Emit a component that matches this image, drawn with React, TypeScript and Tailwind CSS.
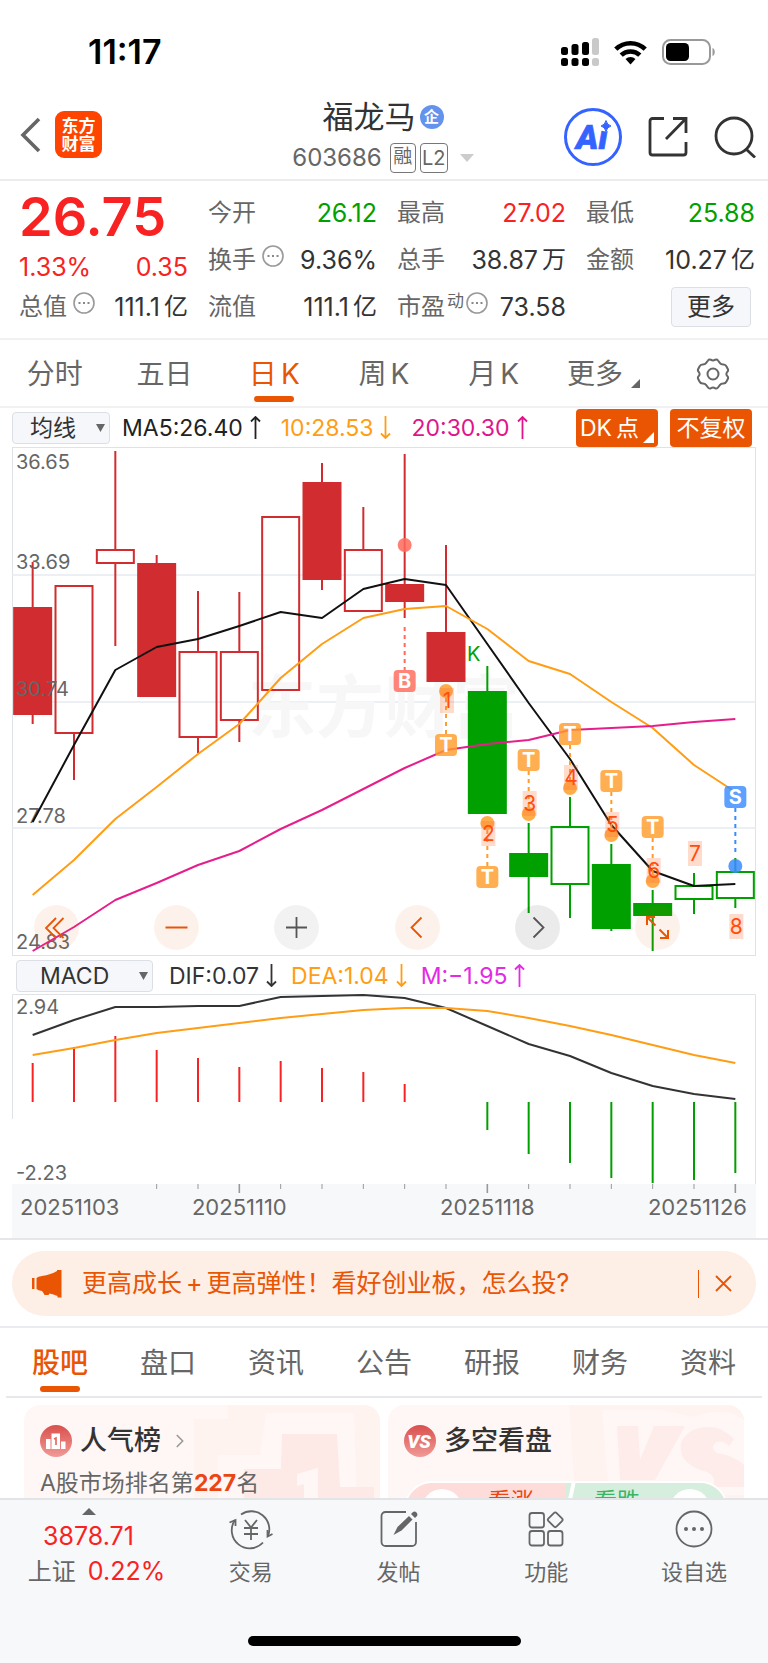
import { ChevronRight } from 'lucide-react';

type Candle = { high: number; top: number; bottom: number; low: number; color: string; hollow?: boolean };

const RED = '#d12c2f';
const GREEN = '#00a000';
const WIDTH = 744;
const STEP = WIDTH / 18;
const cx = (index: number) => STEP * (index + 0.5);
const toPoints = (values: number[]) => values.map((y, i) => `${cx(i)},${y}`).join(' ');

const candles: Candle[] = [
  { high: 115, top: 161, bottom: 267, low: 277, color: RED },
  { high: 139, top: 139, bottom: 286, low: 333, color: RED, hollow: true },
  { high: 4, top: 103, bottom: 116, low: 199, color: RED, hollow: true },
  { high: 108, top: 117, bottom: 249, low: 249, color: RED },
  { high: 144, top: 205, bottom: 290, low: 306, color: RED, hollow: true },
  { high: 145, top: 205, bottom: 273, low: 295, color: RED, hollow: true },
  { high: 70, top: 70, bottom: 243, low: 243, color: RED, hollow: true },
  { high: 16, top: 36, bottom: 132, low: 143, color: RED },
  { high: 60, top: 103, bottom: 164, low: 164, color: RED, hollow: true },
  { high: 7, top: 138, bottom: 154, low: 171, color: RED },
  { high: 98, top: 186, bottom: 234, low: 234, color: RED },
  { high: 219, top: 245, bottom: 366, low: 366, color: GREEN },
  { high: 376, top: 407, bottom: 429, low: 466, color: GREEN },
  { high: 350, top: 380, bottom: 437, low: 471, color: GREEN, hollow: true },
  { high: 397, top: 418, bottom: 481, low: 484, color: GREEN },
  { high: 443, top: 457, bottom: 468, low: 504, color: GREEN },
  { high: 426, top: 439, bottom: 452, low: 467, color: GREEN, hollow: true },
  { high: 411, top: 425, bottom: 451, low: 461, color: GREEN, hollow: true },
];

const ma5 = [375, 298, 223, 200, 192, 179, 165, 171, 142, 132, 138, 197, 256, 312, 378, 424, 439, 437];
const ma10 = [448, 413, 372, 340, 307, 277, 231, 197, 171, 162, 159, 182, 214, 227, 255, 281, 318, 345];
const ma20 = [504, 480, 453, 436, 418, 404, 382, 363, 342, 321, 303, 297, 293, 283, 281, 279, 275, 272];

const dif = [41, 26, 13, 13, 12, 12, 3, 2, 1, 4, 14, 32, 50, 62, 79, 92, 100, 105];
const dea = [61, 54, 46, 39, 34, 29, 24, 20, 16, 14, 14, 17, 24, 32, 41, 51, 61, 69];
const macdBars = [69, 53, 42, 56, 64, 73, 67, 74, 78, 90, 108, 136, 160, 169, 184, 189, 186, 179];

const axisLabels = [
  { y: 22, text: '36.65' },
  { y: 122, text: '33.69' },
  { y: 249, text: '30.74' },
  { y: 376, text: '27.78' },
  { y: 502, text: '24.83' },
];

// letter badge, its dashed leader and the dot on the candle
const signals = [
  { index: 9, letter: 'B', color: '#ff6a5a', badge: 234, dot: 98, from: 180, to: 223 },
  { index: 10, letter: 'T', color: '#ff9d2b', badge: 298, dot: 244, from: 251, to: 287 },
  { index: 11, letter: 'T', color: '#ff9d2b', badge: 430, dot: 376, from: 383, to: 419 },
  { index: 12, letter: 'T', color: '#ff9d2b', badge: 313, dot: 367, from: 324, to: 360 },
  { index: 13, letter: 'T', color: '#ff9d2b', badge: 287, dot: 341, from: 298, to: 334 },
  { index: 14, letter: 'T', color: '#ff9d2b', badge: 334, dot: 388, from: 345, to: 381 },
  { index: 15, letter: 'T', color: '#ff9d2b', badge: 380, dot: 434, from: 391, to: 427 },
  { index: 17, letter: 'S', color: '#3a8bff', badge: 350, dot: 419, from: 361, to: 405 },
];

const counts = [
  { index: 10, top: 241, n: '1' },
  { index: 11, top: 374, n: '2' },
  { index: 12, top: 344, n: '3' },
  { index: 13, top: 318, n: '4' },
  { index: 14, top: 365, n: '5' },
  { index: 15, top: 411, n: '6' },
  { index: 16, top: 394, n: '7' },
  { index: 17, top: 467, n: '8' },
];

const periods = [['分时'], ['五日'], ['日', 'K'], ['周', 'K'], ['月', 'K']];
const infoTabs = ['股吧', '盘口', '资讯', '公告', '研报', '财务', '资料'];

const StatusBar = () => (
  <div className="flex h-[90px] items-center justify-between pt-[14px] pr-13 pl-22">
    <span className="text-[34px] leading-10 font-semibold text-black">11:17</span>
    <div className="flex items-center gap-[15px]">
      <svg width="38" height="28" viewBox="0 0 38 28" aria-hidden="true">
        <rect x="0" y="9" width="7" height="8" rx="2.5" />
        <rect x="10.5" y="6" width="7" height="11" rx="2.5" />
        <rect x="21" y="4" width="7" height="13" rx="2.5" />
        <rect x="31" y="0" width="7" height="17" rx="2.5" fill="#c9c9c9" />
        <rect x="0" y="20" width="7" height="8" rx="2.5" />
        <rect x="10.5" y="20" width="7" height="8" rx="2.5" />
        <rect x="21" y="20" width="7" height="8" rx="2.5" />
        <rect x="31" y="20" width="7" height="8" rx="2.5" fill="#c9c9c9" />
      </svg>
      <svg width="33" height="25" viewBox="0 0 33 25" fill="none" stroke="#000" strokeWidth="4.6" aria-hidden="true">
        <path d="M1.8 9.2a21 21 0 0 1 29.4 0" />
        <path d="M7.2 15.2a13.4 13.4 0 0 1 18.6 0" />
        <path d="M16.5 24.5l-5-5.5a7.4 7.4 0 0 1 10 0z" fill="#000" stroke="none" />
      </svg>
      <svg width="54" height="26" viewBox="0 0 54 26" aria-hidden="true">
        <rect x="1" y="1" width="47" height="24" rx="7.5" fill="none" stroke="#999" strokeWidth="2" />
        <rect x="4" y="4" width="23" height="18" rx="4.5" />
        <path d="M50.5 9c3 1 3 7 0 8z" fill="#999" />
      </svg>
    </div>
  </div>
);

const Header = () => (
  <header className="flex h-[91px] items-center justify-between border-b-2 border-[#ececee] pr-[10px] pl-5">
    <div className="flex w-[182px] items-center gap-[14px]">
      <button aria-label="返回">
        <svg width="21" height="36" viewBox="0 0 21 36" fill="none" stroke="#666" strokeWidth="3.6">
          <path d="M19 2L3 18l16 16" />
        </svg>
      </button>
      <div className="flex h-[47px] w-[47px] flex-col items-center justify-center rounded-[9px] bg-[#ff4400] text-[17px] leading-[18px] font-bold text-white">
        <span>东方</span>
        <span>财富</span>
      </div>
    </div>
    <div className="flex flex-col items-center pt-1">
      <div className="flex h-[42px] items-center gap-1">
        <h1 className="text-[31px] leading-10 text-[#333]">福龙马</h1>
        <span className="flex h-6 w-6 items-center justify-center rounded-full bg-[#6393ec] text-[15px] leading-5 font-bold text-white">企</span>
      </div>
      <div className="flex h-10 items-center gap-1 text-[#666]">
        <span className="pr-1 text-[24px] leading-8">603686</span>
        <span className="flex h-[30px] w-[26px] items-center justify-center rounded border border-[#777] text-[19px]">融</span>
        <span className="flex h-[30px] w-7 items-center justify-center rounded border border-[#777] text-[20px]">L2</span>
        <svg className="ml-2" width="14" height="8" viewBox="0 0 14 8" fill="#ccc" aria-hidden="true">
          <path d="M0 0h14L7 8z" />
        </svg>
      </div>
    </div>
    <div className="flex items-center gap-[26px] pt-1">
      <button aria-label="AI 助手">
        <svg width="58" height="58" viewBox="0 0 58 58">
          <circle cx="29" cy="29" r="27.5" fill="#fff" stroke="#3563ff" strokeWidth="3" />
          <text x="12" y="41" className="font-[Roboto]" fontSize="34" fontWeight="900" fontStyle="italic" fill="#3563ff" stroke="#3563ff" strokeWidth="0.6">Ai</text>
          <circle cx="41.5" cy="17" r="6.5" fill="#fff" />
          <path d="M42 12.500q1 4.500 5 5.500-4 1-5 5.500-1-4.500-5-5.500 4-1 5-5.500z" fill="#3563ff" stroke="#3563ff" />
        </svg>
      </button>
      <button aria-label="分享">
        <svg width="40" height="41" viewBox="0 0 40 41" fill="none" stroke="#333" strokeWidth="2.8">
          <path d="M16 2.500H4.500a2.500 2.500 0 0 0-2.500 2.500V36.500a2.500 2.500 0 0 0 2.500 2.500H35.500a2.500 2.500 0 0 0 2.500-2.500V26" />
          <path d="M25 2.500H38V17M38 2.500L18 23" />
        </svg>
      </button>
      <button aria-label="搜索">
        <svg width="44" height="42" viewBox="0 0 44 42" fill="none" stroke="#333" strokeWidth="2.8">
          <circle cx="20" cy="20" r="18" />
          <path d="M32 33l9 8.500" />
        </svg>
      </button>
    </div>
  </header>
);

const MoreInfo = () => (
  <svg className="mb-2" width="22" height="22" viewBox="0 0 22 22" aria-hidden="true">
    <circle cx="11" cy="11" r="10" fill="none" stroke="#999" strokeWidth="1.6" />
    <path d="M5.500 11h2M10 11h2M14.500 11h2" stroke="#888" strokeWidth="2" />
  </svg>
);

type QuoteProps = { label: string; value: string; unit?: string; color?: string; info?: boolean; mark?: string };

const Quote = ({ label, value, unit, color = 'text-[#333]', info, mark }: QuoteProps) => (
  <div className="flex h-[47px] items-center justify-between">
    <dt className={`flex items-center text-[#666] ${mark ? 'gap-[2px]' : 'gap-[6px]'}`}>
      <span>{label}</span>
      {mark && <span className="mb-3 text-[17px] leading-5">{mark}</span>}
      {info && <MoreInfo />}
    </dt>
    <dd className={`flex items-center gap-1 text-[25px] ${color}`}>
      {value}
      {unit && <span className="text-[24px]">{unit}</span>}
    </dd>
  </div>
);

const QuotePanel = () => (
  <section className="border-b-2 border-[#f1f1f3] pt-2 pr-[13px] pb-2 pl-[19px] text-[24px] leading-8 whitespace-nowrap">
    <dl className="grid grid-cols-4 gap-x-5">
      <div>
        <div className="flex h-[56px] items-center text-[54px] leading-[56px] font-semibold text-[#f92222]">26.75</div>
        <div className="flex h-[38px] items-center justify-between pt-[6px] text-[25px] text-[#f92222]">
          <span>1.33%</span>
          <span>0.35</span>
        </div>
        <Quote label="总值" value="111.1" unit="亿" info />
      </div>
      <div>
        <Quote label="今开" value="26.12" color="text-[#00a000]" />
        <Quote label="换手" value="9.36%" info />
        <Quote label="流值" value="111.1" unit="亿" />
      </div>
      <div>
        <Quote label="最高" value="27.02" color="text-[#f92222]" />
        <Quote label="总手" value="38.87" unit="万" />
        <Quote label="市盈" value="73.58" mark="动" info />
      </div>
      <div>
        <Quote label="最低" value="25.88" color="text-[#00a000]" />
        <Quote label="金额" value="10.27" unit="亿" />
        <div className="flex h-[47px] items-center justify-end pr-1">
          <button className="h-10 w-20 rounded border border-[#dcdfe6] bg-[#f6f7fa] text-[#333]">更多</button>
        </div>
      </div>
    </dl>
  </section>
);

const PeriodTabs = () => (
  <nav className="grid h-[68px] grid-cols-7 border-b-2 border-[#f1f1f3] pt-px text-[28px] leading-9 text-[#666]">
    {periods.map((parts, index) => (
      <button key={parts.join('')} className={`relative flex items-center justify-center gap-1 ${index === 2 ? 'text-[#ea5504]' : ''}`}>
        {parts.map((part) => (
          <span key={part}>{part}</span>
        ))}
        {index === 2 && <span className="absolute bottom-1 h-[6px] w-10 rounded-full bg-[#ea5504]" />}
      </button>
    ))}
    <button className="flex items-center justify-center gap-2">
      更多
      <svg className="mt-5" width="9" height="9" viewBox="0 0 9 9" fill="#666" aria-hidden="true">
        <path d="M9 0v9H0z" />
      </svg>
    </button>
    <button className="flex items-center justify-center" aria-label="设置">
      <svg width="34" height="32" viewBox="0 0 34 32" fill="none" stroke="#666" strokeWidth="2">
        <path d="M12 2.500Q13 1 15 1.800 17 3 19 1.800 21 1 22 2.500L24 5.200Q25 6.600 27.500 6.500 29.500 6.500 30.500 8.500L32 11.500Q32.500 13 31 14.200 29.800 16 31 17.800 32.500 19 32 20.500L30.500 23.500Q29.500 25.500 27.500 25.500 25 25.400 24 26.800L22 29.500Q21 31 19 30.200 17 29 15 30.200 13 31 12 29.500L10 26.800Q9 25.400 6.500 25.500 4.500 25.500 3.500 23.500L2 20.500Q1.500 19 3 17.800 4.200 16 3 14.200 1.500 13 2 11.500L3.500 8.500Q4.500 6.500 6.500 6.500 9 6.600 10 5.200z" />
        <circle cx="17" cy="16" r="5.5" />
      </svg>
    </button>
  </nav>
);

const Trend = ({ text, color, down }: { text: string; color: string; down?: boolean }) => (
  <span className={`flex items-center gap-[7px] ${color}`}>
    {text}
    <svg width="11" height="23" viewBox="0 0 11 23" fill="none" stroke="currentColor" strokeWidth="1.8" aria-hidden="true">
      <path d={down ? 'M5.500 0v22M1 17.500l4.500 4.500 4.500-4.500' : 'M5.500 23V1M1 5.500L5.500 1 10 5.500'} />
    </svg>
  </span>
);

const Picker = ({ label, value, wide }: { label: string; value: string; wide?: boolean }) => (
  <div className="relative">
    <select
      aria-label={label}
      className={`block h-8 appearance-none rounded border border-[#dcdfe6] bg-[#f6f7fa] leading-7 text-[#333] ${wide ? 'w-[137px] pl-[23px]' : 'w-[98px] pl-[17px]'}`}
    >
      <option>{value}</option>
    </select>
    <svg className="pointer-events-none absolute top-3 right-[5px]" width="9" height="8" viewBox="0 0 9 8" fill="#666" aria-hidden="true">
      <path d="M0 0h9L4.500 8z" />
    </svg>
  </div>
);

const CandleChart = () => (
  <div className="relative">
    <svg className="block w-full" viewBox="0 0 744 509">
      <rect x="0.5" y="0.5" width="743" height="508" fill="#fff" stroke="#dfe2e6" />
      {[128, 255, 381].map((y) => (
        <path key={y} d={`M0 ${y}H744`} stroke="#e6eaf1" strokeWidth="1.5" />
      ))}
      <text x="236" y="285" fontSize="68" fontWeight="700" fill="#f7f7f7">东方财富</text>
      {candles.map((c, i) => (
        <g key={i} stroke={c.color} strokeWidth="2">
          <path d={`M${cx(i)} ${c.high}V${c.top}M${cx(i)} ${c.bottom}V${c.low}`} />
          <rect x={cx(i) - 18.5} y={c.top} width="37" height={c.bottom - c.top} fill={c.hollow ? 'none' : c.color} />
        </g>
      ))}
      {axisLabels.map((label) => (
        <text key={label.text} x="4" y={label.y} fontSize="20" fill="#666">{label.text}</text>
      ))}
      <g fill="none" strokeWidth="2" strokeLinejoin="round">
        <polyline points={toPoints(ma5)} stroke="#111" />
        <polyline points={toPoints(ma10)} stroke="#ff9d14" />
        <polyline points={toPoints(ma20)} stroke="#e61e8c" />
      </g>
      <text x="455" y="214" fontSize="20" fill={GREEN}>K</text>
      {signals.map((s) => (
        <g key={s.index}>
          <path d={`M${cx(s.index)} ${s.from}V${s.to}`} stroke={s.color} strokeWidth="2" strokeDasharray="4 4" />
          <circle cx={cx(s.index)} cy={s.dot} r="7" fill={s.color} fillOpacity="0.85" />
          <rect x={cx(s.index) - 11} y={s.badge - 11} width="22" height="22" rx="4" fill={s.color} fillOpacity="0.82" />
          <text x={cx(s.index)} y={s.badge + 7} fontSize="20" fontWeight="700" fill="#fff" textAnchor="middle">{s.letter}</text>
        </g>
      ))}
      {counts.map((c) => (
        <g key={c.n}>
          <rect x={cx(c.index) - 6} y={c.top} width="14" height="25" fill="#ff6a2b" fillOpacity="0.24" />
          <text x={cx(c.index) + 1} y={c.top + 20} fontSize="21" fill="#ff4d0f" textAnchor="middle">{c.n}</text>
        </g>
      ))}
    </svg>
    <div className="absolute inset-x-[22px] bottom-[6px] flex justify-between pr-[54px]">
      <button aria-label="最早" className="h-[45px] w-[45px] rounded-full bg-[#ea5504]/8">
        <svg viewBox="0 0 45 45" fill="none" stroke="#ea5504" strokeWidth="1.8">
          <path d="M22 13L12 23l10 10M29.500 13l-10 10 10 10" />
        </svg>
      </button>
      <button aria-label="缩小" className="h-[45px] w-[45px] rounded-full bg-[#ea5504]/8">
        <svg viewBox="0 0 45 45" stroke="#ea5504" strokeWidth="2">
          <path d="M11.500 22.500h22" />
        </svg>
      </button>
      <button aria-label="放大" className="h-[45px] w-[45px] rounded-full bg-black/5">
        <svg viewBox="0 0 45 45" stroke="#555" strokeWidth="1.8">
          <path d="M12 22.500h21M22.500 12v21" />
        </svg>
      </button>
      <button aria-label="向左" className="h-[45px] w-[45px] rounded-full bg-[#ea5504]/8">
        <svg viewBox="0 0 45 45" fill="none" stroke="#ea5504" strokeWidth="1.8">
          <path d="M26.500 12.500l-10 10 10 10" />
        </svg>
      </button>
      <button aria-label="向右" className="h-[45px] w-[45px] rounded-full bg-black/8">
        <svg viewBox="0 0 45 45" fill="none" stroke="#555" strokeWidth="1.8">
          <path d="M18.500 12.500l10 10-10 10" />
        </svg>
      </button>
      <button aria-label="全屏" className="h-[45px] w-[45px] rounded-full bg-[#ea5504]/8">
        <svg viewBox="0 0 45 45" fill="none" stroke="#ea5504" strokeWidth="2">
          <path d="M12 20v-8h8M12 12l8.500 8.500M33 25v8h-8M33 33l-8.500-8.500" />
        </svg>
      </button>
    </div>
  </div>
);

const MacdChart = () => (
  <svg className="block w-full" viewBox="0 0 744 244">
    <path d="M0.500 125V0.500H743.500V190" fill="none" stroke="#dfe2e6" />
    <rect x="0" y="190" width="744" height="54" fill="#f7f8fa" />
    {macdBars.map((y, i) => (
      <path key={i} d={`M${cx(i)} 108V${y}`} stroke={y < 108 ? '#f92222' : GREEN} strokeWidth="2" />
    ))}
    {macdBars.map((_, i) =>
      i > 2 ? <path key={i} d={`M${cx(i)} 190v${i % 6 === 5 ? 9 : 5}`} stroke="#999" strokeWidth={i % 6 === 5 ? 1.6 : 1} /> : null
    )}
    <g fill="none" strokeWidth="2" strokeLinejoin="round">
      <polyline points={toPoints(dif)} stroke="#333" />
      <polyline points={toPoints(dea)} stroke="#ff9d14" />
    </g>
    <g fill="#666" fontSize="20">
      <text x="4" y="20">2.94</text>
      <text x="4" y="186">-2.23</text>
    </g>
    <g fill="#666" fontSize="22">
      <text x="8" y="221">20251103</text>
      <text x={cx(5)} y="221" textAnchor="middle">20251110</text>
      <text x={cx(11)} y="221" textAnchor="middle">20251118</text>
      <text x="735" y="221" textAnchor="end">20251126</text>
    </g>
  </svg>
);

const ChartPanel = () => (
  <section className="border-b-2 border-[#e4e6ea] px-3 text-[23px] leading-8 whitespace-nowrap">
    <div className="flex h-[39px] items-center">
      <Picker label="主图指标" value="均线" />
      <div className="flex flex-1 gap-5 pl-3">
        <Trend text="MA5:26.40" color="text-[#222]" />
        <Trend text="10:28.53" color="text-[#ff9d14]" down />
        <Trend text="20:30.30" color="text-[#e0148c]" />
      </div>
      <div className="flex gap-3 pr-1">
        <button className="relative flex h-[38px] w-[82px] items-center gap-1 rounded bg-[#ea5504] pl-1 text-white">
          <span>DK</span>
          <span>点</span>
          <svg className="absolute right-1 bottom-1" width="11" height="11" viewBox="0 0 11 11" fill="#fff" aria-hidden="true">
            <path d="M11 0v11H0z" />
          </svg>
        </button>
        <button className="h-[38px] w-[82px] rounded bg-[#ea5504] text-white">不复权</button>
      </div>
    </div>
    <CandleChart />
    <div className="flex h-[38px] items-center pt-px pl-1">
      <Picker label="副图指标" value="MACD" wide />
      <div className="flex gap-[14px] pl-4">
        <Trend text="DIF:0.07" color="text-[#333]" down />
        <Trend text="DEA:1.04" color="text-[#ff9d14]" down />
        <Trend text="M:−1.95" color="text-[#e32be3]" />
      </div>
    </div>
    <MacdChart />
  </section>
);

const Notice = () => (
  <div className="border-b-2 border-[#ebecef] px-3 pt-[11px] pb-[10px]">
    <div className="flex h-[65px] items-center rounded-full bg-[#fdeee6] pr-6 pl-5 text-[25px] text-[#ea5504]">
      <svg width="30" height="28" viewBox="0 0 30 28" fill="#ea5504" aria-hidden="true">
        <path d="M0 8h2.500v11H0zM4.500 8Q6 6.500 10 6 19 4.500 25 1V0h4.500v27.500H25.500V26q-4-2-8-2.500l-1 1.500h-4l-1-2-1.500-2Q6 20.500 4.500 19z" />
      </svg>
      <a href="#notice" className="flex-1 pl-5 whitespace-nowrap">
        更高成长<span className="mx-1">+</span>更高弹性！看好创业板，怎么投?
      </a>
      <span className="h-7 w-px bg-[#ea5504]" />
      <button aria-label="关闭" className="ml-4">
        <svg width="17" height="17" viewBox="0 0 17 17" stroke="#ea5504" strokeWidth="1.8">
          <path d="M1 1l15 15M16 1L1 16" />
        </svg>
      </button>
    </div>
  </div>
);

const InfoTabs = () => (
  <nav className="mx-[6px] grid h-[70px] grid-cols-7 border-b-2 border-[#e6e8ec] pt-[2px] text-[28px] leading-9 text-[#666]">
    {infoTabs.map((tab, index) => (
      <button key={tab} className={`relative flex items-center justify-center ${index === 0 ? 'font-medium text-[#ea5504]' : ''}`}>
        {tab}
        {index === 0 && <span className="absolute bottom-1 h-[6px] w-10 rounded-full bg-[#ea5504]" />}
      </button>
    ))}
  </nav>
);

const Cards = () => (
  <div className="grid grid-cols-2 gap-2 px-6 pt-[7px]">
    <div className="relative h-[180px] overflow-hidden rounded-2xl bg-[#fff7f5] px-4 pt-4">
      <svg className="absolute top-0 right-0" width="190" height="180" viewBox="0 0 190 180" aria-hidden="true">
        <path d="M4 14H38V0H190V180H4z" fill="#fff3f0" />
        <path d="M28 50H70L76 8H164L169 180H28z" fill="#fff7f5" />
        <path d="M92 29H147L150 82H184V180H54V64H91z" fill="#fdeae7" />
        <path d="M107 69l21-6v40h-14V79l-7 2z" fill="#fff7f5" />
      </svg>
      <div className="relative flex h-10 items-center gap-2">
        <svg width="32" height="32" viewBox="0 0 32 32" aria-hidden="true">
          <defs>
            <linearGradient id="badge-red" x1="0" y1="0" x2="0" y2="1">
              <stop offset="0" stopColor="#d9504c" />
              <stop offset="1" stopColor="#f09a97" />
            </linearGradient>
          </defs>
          <circle cx="16" cy="16" r="16" fill="url(#badge-red)" />
          <path d="M6 14h4.500v10H6zM11.500 8.500h8.500V24h-8.500zM21 16.500h4.500V24H21z" fill="#fff" />
          <path d="M14 14l2-1v7" fill="none" stroke="#e1645f" strokeWidth="1.6" />
        </svg>
        <h2 className="text-[27px] leading-9 font-medium text-[#333]">人气榜</h2>
        <ChevronRight size={22} strokeWidth={1.8} color="#999" />
      </div>
      <p className="relative pt-[2px] text-[23px] leading-10 whitespace-nowrap text-[#666]">
        A股市场排名第<b className="font-bold text-[#ea4614]">227</b>名
      </p>
    </div>
    <div className="relative h-[180px] overflow-hidden rounded-2xl bg-[#fff7f5] px-4 pt-4">
      <svg className="absolute top-0 right-0" width="175" height="180" viewBox="0 0 175 180" aria-hidden="true">
        <path d="M0 0H175V180H12z" fill="#fff3f0" />
        <path d="M33 5H90L125 12Q155 0 175 15V90H40z" fill="#fff7f5" />
        <path d="M48 21H69L71 55 85 21H116L86 75H51z" fill="#fdecea" />
        <path d="M165 34Q148 16 124 25 105 36 115 54 124 64 138 67 148 72 144 82H175V60Q164 50 148 48 140 42 148 37 155 35 160 41z" fill="#fdecea" />
      </svg>
      <div className="relative flex h-10 items-center gap-2">
        <svg width="32" height="32" viewBox="0 0 32 32" aria-hidden="true">
          <circle cx="16" cy="16" r="16" fill="url(#badge-red)" />
          <text x="15" y="23" className="font-[Roboto]" fontSize="19" fontWeight="900" fontStyle="italic" fill="#fff" textAnchor="middle">VS</text>
        </svg>
        <h2 className="text-[27px] leading-9 font-medium text-[#333]">多空看盘</h2>
      </div>
      <div className="relative mt-5 grid h-14 grid-cols-2 overflow-hidden rounded-full border-2 border-white bg-[#fddcda] text-[23px] leading-9">
        <div className="flex items-start justify-between pr-8 pl-4 text-[#ea4614]">
          <span className="mt-[6px] h-10 w-10 rounded-full bg-white" />
          <span>看涨</span>
        </div>
        <div className="flex items-start justify-between bg-[#d6eedd] pr-4 pl-7 text-[#3ab564]">
          <span>看跌</span>
          <span className="mt-[6px] h-10 w-10 rounded-full bg-white" />
        </div>
        <span className="absolute left-1/2 h-full w-1 -skew-x-12 bg-white" />
      </div>
    </div>
  </div>
);

const BottomBar = () => (
  <footer className="border-t-2 border-[#e2e4e7] bg-[#f7f8fa] pb-[17px] text-[#666]">
    <div className="flex h-[136px] pt-2">
      <button className="flex w-[177px] flex-col items-center text-[24px] leading-[35px]">
        <svg width="14" height="7" viewBox="0 0 14 7" fill="#666" aria-hidden="true">
          <path d="M7 0l7 7H0z" />
        </svg>
        <span className="pt-1 text-[25px] text-[#f92222]">3878.71</span>
        <span className="flex gap-3 pl-4">
          上证 <span className="text-[25px] text-[#f92222]">0.22%</span>
        </span>
      </button>
      <div className="grid flex-1 grid-cols-4 text-[22px] leading-8">
        <button className="flex flex-col items-center gap-[6px]">
          <svg width="44" height="42" viewBox="0 0 44 42" fill="none" stroke="#666" strokeWidth="1.8">
            <path d="M12 6.500A18 18 0 0 1 39 28M34 34.500A18 18 0 0 1 6 12" />
            <path d="M0.500 14.500l6-2.500v6M38.500 22v6.500l5-2.500" />
            <path d="M16 12l6 7.500 6-7.500M15 20h14M15 26h14M22 20v12" />
          </svg>
          交易
        </button>
        <button className="flex flex-col items-center gap-[6px]">
          <svg width="38" height="42" viewBox="0 0 38 42" fill="none" stroke="#666" strokeWidth="1.8">
            <path d="M26 4H5.500A4 4 0 0 0 1.500 8V34a4 4 0 0 0 4 4H32a4 4 0 0 0 4-4V14" />
            <path d="M13.500 27l4-8L29 8l3.500 3.500L21.500 22.500zM31 6l2-2q2-1 3.500.500t.5 3.500l-2 2z" fill="#666" stroke="none" />
          </svg>
          发帖
        </button>
        <button className="flex flex-col items-center gap-[6px]">
          <svg width="36" height="42" viewBox="0 0 36 42" fill="none" stroke="#666" strokeWidth="1.8">
            <rect x="1.5" y="5" width="14.5" height="14.5" rx="2.5" />
            <rect x="1.5" y="23" width="14.5" height="14.5" rx="2.5" />
            <rect x="20" y="23" width="14.5" height="14.5" rx="2.5" />
            <rect x="21.5" y="6" width="11.5" height="11.5" rx="2" transform="rotate(45 27.25 11.75)" />
          </svg>
          功能
        </button>
        <button className="flex flex-col items-center gap-[6px]">
          <svg width="38" height="42" viewBox="0 0 38 42">
            <circle cx="19" cy="21" r="17.5" fill="none" stroke="#666" strokeWidth="1.8" />
            <g fill="#666">
              <circle cx="11" cy="21" r="2" />
              <circle cx="19" cy="21" r="2" />
              <circle cx="27" cy="21" r="2" />
            </g>
          </svg>
          设自选
        </button>
      </div>
    </div>
    <div className="mx-auto h-[10px] w-[273px] rounded-full bg-black" />
  </footer>
);

export default function App() {
  return (
    <div className="flex h-screen flex-col bg-white font-['Inter','Noto_Sans_CJK_SC',sans-serif]">
      <StatusBar />
      <Header />
      <main className="min-h-0 flex-1 overflow-hidden">
        <QuotePanel />
        <PeriodTabs />
        <ChartPanel />
        <Notice />
        <InfoTabs />
        <Cards />
      </main>
      <BottomBar />
    </div>
  );
}
